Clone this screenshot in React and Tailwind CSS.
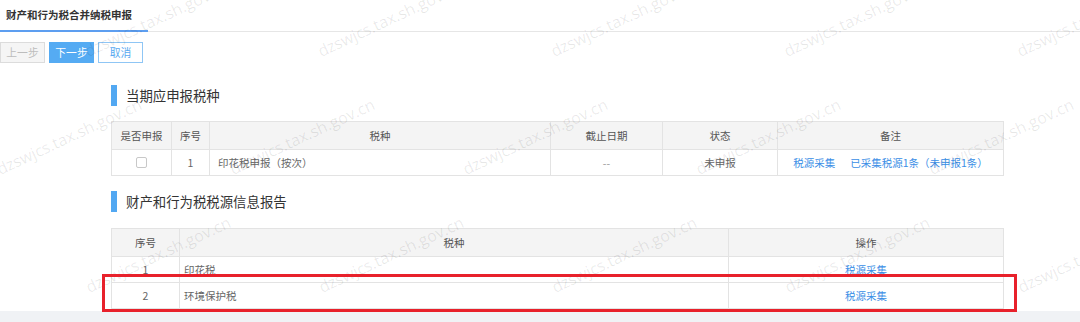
import { useMemo } from 'react';

const rows1 = [
    { id: 1, name: '印花税申报（按次）', deadline: '--', status: '未申报' },
];

const rows2 = [
    { id: 1, name: '印花税' },
    { id: 2, name: '环境保护税' },
];

function SectionTitle({ children }) {
    return (
        <div className="flex h-[21px] items-center">
            <span className="h-[21px] w-[6px] bg-[#52a8f2]" />
            <span className="ml-[9px] text-[13.4px] leading-none text-[#333]">{children}</span>
        </div>
    );
}

function Watermarks() {
    // rows of the repeated domain stamp, staggered like the original page
    const marks = useMemo(() => {
        const list = [];
        [
            [57, 89],
            [175, 1],
            [293, 90],
        ].forEach(([y, x0]) => {
            for (let i = -1; i < 5; i++) list.push({ x: x0 + i * 233, y });
        });
        return list;
    }, []);

    return (
        <div className="pointer-events-none absolute inset-0 overflow-hidden">
            {marks.map((m, i) => (
                <span
                    key={i}
                    className="absolute origin-bottom-left -rotate-[25deg] whitespace-nowrap font-['Open_Sans',sans-serif] text-[16px] leading-[16px] text-black/[0.09]"
                    style={{ left: m.x, top: m.y - 14 }}
                >
                    dzswjcs.tax.sh.gov.cn
                </span>
            ))}
        </div>
    );
}

export default function App() {
    const th = 'border border-[#e3e3e3] bg-[#f4f4f4] font-normal text-[#555]';
    const td = 'border border-[#e3e3e3] text-[#666]';

    return (
        <div className="relative h-[322px] overflow-hidden bg-white font-['Microsoft_YaHei','Noto_Sans_CJK_SC',sans-serif] text-[10.5px]">
            <div className="flex h-[32px] border-b border-[#e6e6e6]">
                <div className="-mb-px flex h-[32px] w-[148px] items-start border-b-2 border-[#5d9ef0] pl-[6px] pt-[7px] text-[10.5px] font-bold text-[#333]">
                    财产和行为税合并纳税申报
                </div>
            </div>

            <div className="mt-[10px] flex gap-[4px]">
                <button className="h-[21px] w-[45px] border border-[#dcdcdc] bg-[#f5f5f5] text-[10.8px] text-[#bdbdbd]">
                    上一步
                </button>
                <button className="h-[21px] w-[45px] border border-[#55abf3] bg-[#55abf3] text-[10.8px] text-white">
                    下一步
                </button>
                <button className="h-[21px] w-[45px] border border-[#8fc6f5] bg-white text-[10.8px] text-[#58a9f0]">
                    取消
                </button>
            </div>

            <div className="ml-[111px] w-[892px]">
                <div className="mt-[22px]">
                    <SectionTitle>当期应申报税种</SectionTitle>
                </div>

                <table className="mt-[15px] w-[892px] table-fixed border-collapse">
                    <colgroup>
                        <col className="w-[60px]" />
                        <col className="w-[38px]" />
                        <col className="w-[341px]" />
                        <col className="w-[112px]" />
                        <col className="w-[115px]" />
                        <col className="w-[226px]" />
                    </colgroup>
                    <thead>
                        <tr className="h-[28px]">
                            <th className={th}>是否申报</th>
                            <th className={th}>序号</th>
                            <th className={th}>税种</th>
                            <th className={th}>截止日期</th>
                            <th className={th}>状态</th>
                            <th className={th}>备注</th>
                        </tr>
                    </thead>
                    <tbody>
                        {rows1.map((r) => (
                            <tr key={r.id} className="h-[26px]">
                                <td className={td}>
                                    <span className="mx-auto block h-[11px] w-[11px] rounded-[2px] border border-[#c8c8c8] bg-white" />
                                </td>
                                <td className={`${td} text-center`}>{r.id}</td>
                                <td className={`${td} pl-[8px]`}>{r.name}</td>
                                <td className={`${td} text-center`}>
                                    <span className="text-[#999]">{r.deadline}</span>
                                </td>
                                <td className={`${td} text-center`}>{r.status}</td>
                                <td className={`${td} text-center`}>
                                    <span className="text-[#3a8ee6]">税源采集</span>
                                    <span className="ml-[15px] text-[#3a8ee6]">已采集税源1条（未申报1条）</span>
                                </td>
                            </tr>
                        ))}
                    </tbody>
                </table>

                <div className="mt-[15px]">
                    <SectionTitle>财产和行为税税源信息报告</SectionTitle>
                </div>

                <table className="mt-[16px] w-[892px] table-fixed border-collapse">
                    <colgroup>
                        <col className="w-[68px]" />
                        <col className="w-[549px]" />
                        <col className="w-[275px]" />
                    </colgroup>
                    <thead>
                        <tr className="h-[28px]">
                            <th className={th}>序号</th>
                            <th className={th}>税种</th>
                            <th className={th}>操作</th>
                        </tr>
                    </thead>
                    <tbody>
                        {rows2.map((r) => (
                            <tr key={r.id} className="h-[26px]">
                                <td className={`${td} text-center`}>{r.id}</td>
                                <td className={`${td} pl-[4px]`}>{r.name}</td>
                                <td className={`${td} text-center`}>
                                    <span className="text-[#3a8ee6]">税源采集</span>
                                </td>
                            </tr>
                        ))}
                    </tbody>
                </table>
            </div>

            <div className="mt-[2px] h-[20px] bg-[#f0f2f5]" />

            <Watermarks />

            {/* red highlight drawn over the second row */}
            <div className="pointer-events-none absolute left-[102px] top-[274px] h-[38px] w-[915px] border-[3px] border-[#e8212b]" />
        </div>
    );
}
